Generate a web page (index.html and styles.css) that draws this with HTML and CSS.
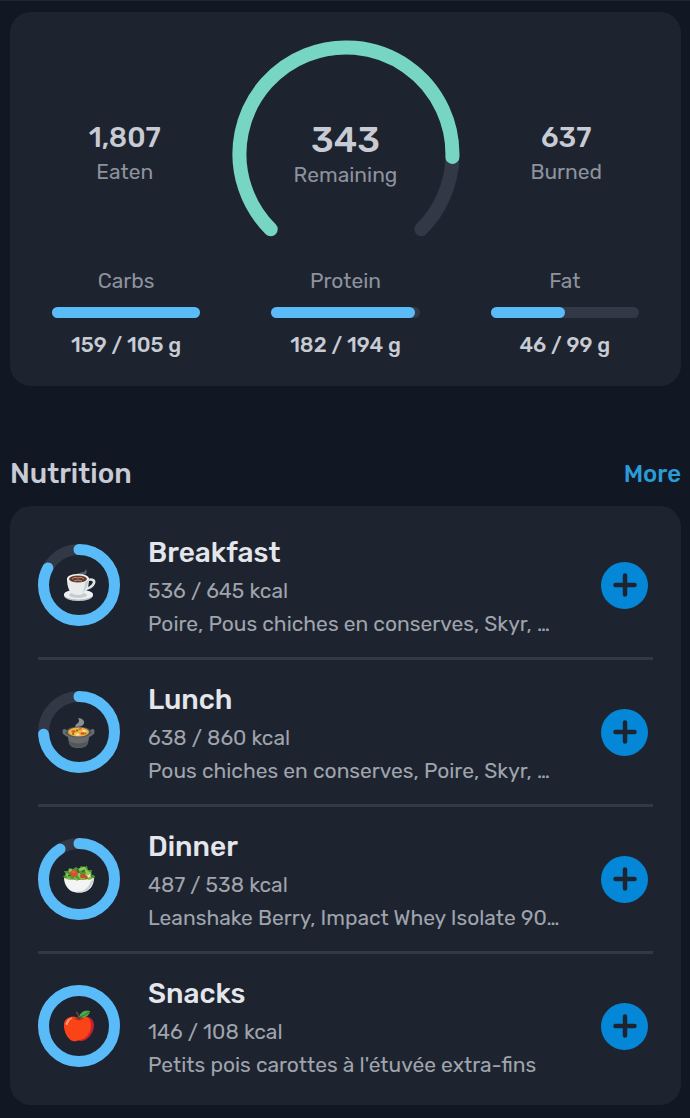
FILE: index.html
```html
<!DOCTYPE html>
<html lang="en">
  <head>
    <meta charset="UTF-8" />
    <meta name="viewport" content="width=device-width, initial-scale=1.0" />
    <title>Nutrition</title>
    <link rel="stylesheet" href="styles.css">
  </head>

  <body>
    <section class="card summary">
      <div class="totals">
        <div class="stat">
          <span class="stat-value">1,807</span>
          <span class="label">Eaten</span>
        </div>
        <div class="gauge">
          <svg viewBox="0 0 228 228" aria-hidden="true">
            <path class="gauge-track" d="M38.7 189.3A106.5 106.5 0 1 1 189.3 189.3" />
            <path class="gauge-fill" d="M38.7 189.3A106.5 106.5 0 1 1 220.4 117" />
          </svg>
          <div class="stat remaining">
            <span class="stat-value">343</span>
            <span class="label">Remaining</span>
          </div>
        </div>
        <div class="stat">
          <span class="stat-value">637</span>
          <span class="label">Burned</span>
        </div>
      </div>

      <div class="macros">
        <div class="macro">
          <span class="label">Carbs</span>
          <div class="bar"><div class="bar-fill" style="width: 100%"></div></div>
          <span class="macro-value">159 / 105 g</span>
        </div>
        <div class="macro">
          <span class="label">Protein</span>
          <div class="bar"><div class="bar-fill" style="width: 97%"></div></div>
          <span class="macro-value">182 / 194 g</span>
        </div>
        <div class="macro">
          <span class="label">Fat</span>
          <div class="bar"><div class="bar-fill" style="width: 50%"></div></div>
          <span class="macro-value">46 / 99 g</span>
        </div>
      </div>
    </section>

    <header class="section-header">
      <h2>Nutrition</h2>
      <a href="#" class="more">More</a>
    </header>

    <section class="card meals">
      <article class="meal">
        <svg class="ring" viewBox="0 0 82 82" aria-hidden="true">
          <circle class="ring-track" cx="41" cy="41" r="35.5" />
          <path class="ring-fill" pathLength="100" stroke-dasharray="83 100" d="M41 5.5a35.5 35.5 0 1 1 0 71a35.5 35.5 0 1 1 0-71" />
          <!-- coffee cup -->
          <path d="M37 32c1-4 6-2 6-4 2 1 4 0 5-3 2 5-1 6-4 6-1 3-4 2-7 2" fill="#596471" />
          <ellipse cx="40.5" cy="51.5" rx="14.5" ry="5.5" fill="#bac3c8" />
          <ellipse cx="40.5" cy="50.5" rx="14.5" ry="5" fill="#eef0ef" />
          <ellipse cx="40" cy="51" rx="9" ry="3" fill="#c5cdd1" />
          <path d="M48 37c5-3 9-1 8 2s-5 6-10 6" fill="none" stroke="#dfe4e6" stroke-width="2.5" />
          <path d="M29 34c0 9 2 17 11 17s11-8 11-17z" fill="#e9ecec" />
          <path d="M44 49c5-3 6-9 7-15l-4 2c0 6-1 10-3 13" fill="#c8d0d4" />
          <ellipse cx="40" cy="34.5" rx="11" ry="4.500" fill="#f3f4f2" />
          <ellipse cx="40" cy="35" rx="9" ry="3.500" fill="#633a2d" />
          <path d="M34 35q3-3 6-1 3-2 6 1M36 37q4-2 8 0" fill="none" stroke="#bc917a" stroke-width="1" />
        </svg>
        <div class="meal-info">
          <h3>Breakfast</h3>
          <p>536 / 645 kcal</p>
          <p>Poire, Pous chiches en conserves, Skyr, …</p>
        </div>
        <button class="add" aria-label="Add breakfast">
          <svg viewBox="0 0 24 24"><path d="M12 2.5v19M2.5 12h19" /></svg>
        </button>
      </article>

      <article class="meal">
        <svg class="ring" viewBox="0 0 82 82" aria-hidden="true">
          <circle class="ring-track" cx="41" cy="41" r="35.5" />
          <path class="ring-fill" pathLength="100" stroke-dasharray="74 100" d="M41 5.5a35.5 35.5 0 1 1 0 71a35.5 35.5 0 1 1 0-71" />
          <!-- pot of food -->
          <path d="M38 37c-3-5 6-4 2-10 5 0 8 4 5 7-2 2-5 1-5 3" fill="#8b8e94" />
          <path d="M29 41q-4-4-3 1l4 3M52 41q4-4 3 1l-4 3" fill="none" stroke="#696b6c" stroke-width="2.5" />
          <path d="M29 41l2 11q1 5 9.500 5t9.500-5l2-11z" fill="#686b6d" />
          <path d="M31 50q9 5 19 0l-1 4q-8 5-17 0z" fill="#535759" />
          <ellipse cx="40.5" cy="41" rx="12" ry="5.5" fill="#505557" />
          <ellipse cx="40.5" cy="41" rx="10.5" ry="4.5" fill="#f1b33e" />
          <path d="M33 40l3-1 2 2-3 1zM42 42l4-1 1 2-3 1zM40 38l3-1 1 1-3 1z" fill="#d9532d" />
          <path d="M37 43l3-1 2 2-3 1zM44 39l3 0 1 2-3 0z" fill="#f6e3a5" />
          <path d="M38 39l2 1M47 42l1 1M34 43l2 0" stroke="#657a2c" stroke-width="1.5" />
        </svg>
        <div class="meal-info">
          <h3>Lunch</h3>
          <p>638 / 860 kcal</p>
          <p>Pous chiches en conserves, Poire, Skyr, …</p>
        </div>
        <button class="add" aria-label="Add lunch">
          <svg viewBox="0 0 24 24"><path d="M12 2.5v19M2.5 12h19" /></svg>
        </button>
      </article>

      <article class="meal">
        <svg class="ring" viewBox="0 0 82 82" aria-hidden="true">
          <circle class="ring-track" cx="41" cy="41" r="35.5" />
          <path class="ring-fill" pathLength="100" stroke-dasharray="91 100" d="M41 5.5a35.5 35.5 0 1 1 0 71a35.5 35.5 0 1 1 0-71" />
          <!-- salad bowl -->
          <path d="M27 41l-2-3 3-1-2-4 4 0 1-3 4 1 3-2 3 2 2-3 3 1 3-1 1 4 4 0-1 4 4 2-1 3q-14 5-29 0" fill="#4f9834" />
          <path d="M28 36l4 3M31 33l3-1M41 32l5-2 3 4 4 2M40 35l3 5M50 33l-2 5" fill="none" stroke="#91c952" stroke-width="2.5" />
          <path d="M30 38l3-1M39 31l2 4M47 32l-3 2M50 39l4-1" fill="none" stroke="#286c30" stroke-width="1.5" />
          <path d="M32 34l3-2 4 1 1 3-3 3-4-1z" fill="#e34a32" />
          <path d="M42 37l4-1 3 2-1 4h-5z" fill="#d84630" />
          <path d="M34 34l2-1 1 2z" fill="#f77b61" />
          <path d="M49 37l3-1 1 3-3 1z" fill="#f1e7a0" />
          <path d="M26 40q14 4 30 0c0 8-5 13-10 14q-5 1-10 0c-5-1-10-7-10-14" fill="#f3f4f3" />
          <path d="M53 43q-2 6-8 10l-8 1q5 1 9 0 8-3 10-14z" fill="#cbd0d0" />
          <path d="M28 40l5 1M36 40l4 2M42 41h5M50 41l4-1" stroke="#83b74c" stroke-width="2" />
        </svg>
        <div class="meal-info">
          <h3>Dinner</h3>
          <p>487 / 538 kcal</p>
          <p>Leanshake Berry, Impact Whey Isolate 90…</p>
        </div>
        <button class="add" aria-label="Add dinner">
          <svg viewBox="0 0 24 24"><path d="M12 2.5v19M2.5 12h19" /></svg>
        </button>
      </article>

      <article class="meal">
        <svg class="ring" viewBox="0 0 82 82" aria-hidden="true">
          <circle class="ring-track" cx="41" cy="41" r="35.5" />
          <circle class="ring-fill" cx="41" cy="41" r="35.5" />
          <!-- apple -->
          <path d="M40 33c-5-3-14-1-14 7 0 7 4 15 9 16 3 1 4-1 7 0 6 1 14-7 14-16 0-8-8-10-13-7z" fill="#c91f31" />
          <path d="M40 33c-5-3-14-1-14 7 0 7 4 15 9 16 3 1 4-1 6-1 6 0 12-7 12-14 0-8-5-11-10-8z" fill="#fa4316" />
          <path d="M28 39q1-5 6-6-4 2-5 7z" fill="#ffc0a0" stroke="#ff9b72" stroke-width="1" />
          <path d="M37 33q4 3 8 0" fill="none" stroke="#a52d18" stroke-width="1.5" />
          <path d="M41 34q0-5-3-7" fill="none" stroke="#5b4236" stroke-width="2" />
          <path d="M41 32c2-6 6-7 11-6-1 5-5 8-11 6" fill="#4fa84a" />
          <path d="M42 32q4-1 9-5" fill="none" stroke="#257b37" stroke-width="1" />
        </svg>
        <div class="meal-info">
          <h3>Snacks</h3>
          <p>146 / 108 kcal</p>
          <p>Petits pois carottes à l'étuvée extra-fins</p>
        </div>
        <button class="add" aria-label="Add snacks">
          <svg viewBox="0 0 24 24"><path d="M12 2.5v19M2.5 12h19" /></svg>
        </button>
      </article>
    </section>
  </body>
</html>
```

FILE: styles.css
```css
* {
  box-sizing: border-box;
}

body {
  font-family: Rubik, Roboto, sans-serif;
  background-color: #111824;
  color: #c8cbd3;
  margin: 0;
  padding: 11px 9px 12px 10px;
  border-top: 1px solid #1d2531;
}

h2,
h3,
p {
  margin: 0;
}

.card {
  background-color: #1d2430;
  border-radius: 21px;
}

.summary {
  padding: 28px 8px;
}

.totals {
  display: grid;
  grid-template-columns: 1fr 228px 1fr;
  align-items: center;
}

.stat {
  display: flex;
  flex-direction: column;
  align-items: center;
}

.stat-value {
  font-size: 28px;
  font-weight: 500;
  line-height: 36px;
}

.label {
  font-size: 21px;
  line-height: 32px;
  color: #8d929d;
}

.gauge {
  display: grid;
  place-items: center;
}

.gauge > * {
  grid-area: 1 / 1;
}

.gauge svg {
  width: 100%;
  display: block;
  fill: none;
  stroke-width: 14;
  stroke-linecap: round;
}

.gauge-track {
  stroke: #323846;
}

.gauge-fill {
  stroke: #76d5c3;
}

.remaining {
  padding-top: 4px;
}

.remaining .stat-value {
  font-size: 36px;
  line-height: 38px;
}

.macros {
  display: grid;
  grid-template-columns: repeat(3, 1fr);
  gap: 71px;
  padding: 0 34px;
}

.macro {
  display: flex;
  flex-direction: column;
  align-items: center;
  gap: 14px;
}

.macro .label {
  line-height: 25px;
}

.bar {
  width: 100%;
  height: 11px;
  border-radius: 6px;
  background-color: #323846;
}

.bar-fill {
  height: 100%;
  border-radius: 6px;
  background-color: #59bbf8;
}

.macro-value {
  font-size: 21px;
  font-weight: 500;
  line-height: 26px;
}

.section-header {
  display: flex;
  justify-content: space-between;
  align-items: center;
  margin: 71px 0 15px;
}

.section-header h2 {
  font-size: 28px;
  font-weight: 500;
  line-height: 34px;
}

.more {
  font-size: 24px;
  font-weight: 500;
  line-height: 34px;
  color: #2b9bd6;
  text-decoration: none;
}

.meals {
  padding: 7px 28px 4px;
}

.meal {
  display: flex;
  align-items: center;
  gap: 28px;
  height: 147px;
  padding-right: 5px;
  border-bottom: 3px solid #323846;
}

.meal:last-child {
  border-bottom-color: transparent;
}

.ring {
  width: 82px;
  height: 82px;
  flex: none;
}

.ring-track,
.ring-fill {
  fill: none;
  stroke-width: 11;
  stroke-linecap: round;
}

.ring-track {
  stroke: #323846;
}

.ring-fill {
  stroke: #59bbf8;
}

.meal-info {
  flex: 1;
  min-width: 0;
}

.meal-info h3 {
  font-size: 28px;
  font-weight: 500;
  line-height: 43px;
  color: #e4e6eb;
}

.meal-info p {
  font-size: 21px;
  line-height: 33px;
  color: #a0a4ad;
  white-space: nowrap;
  overflow: hidden;
  text-overflow: ellipsis;
}

.add {
  width: 47px;
  height: 47px;
  flex: none;
  padding: 0;
  border: none;
  border-radius: 50%;
  background-color: #0587d8;
  display: grid;
  place-items: center;
  cursor: pointer;
}

.add svg {
  width: 24px;
  height: 24px;
  fill: none;
  stroke: #1d2430;
  stroke-width: 4.5;
  stroke-linecap: round;
}
```
